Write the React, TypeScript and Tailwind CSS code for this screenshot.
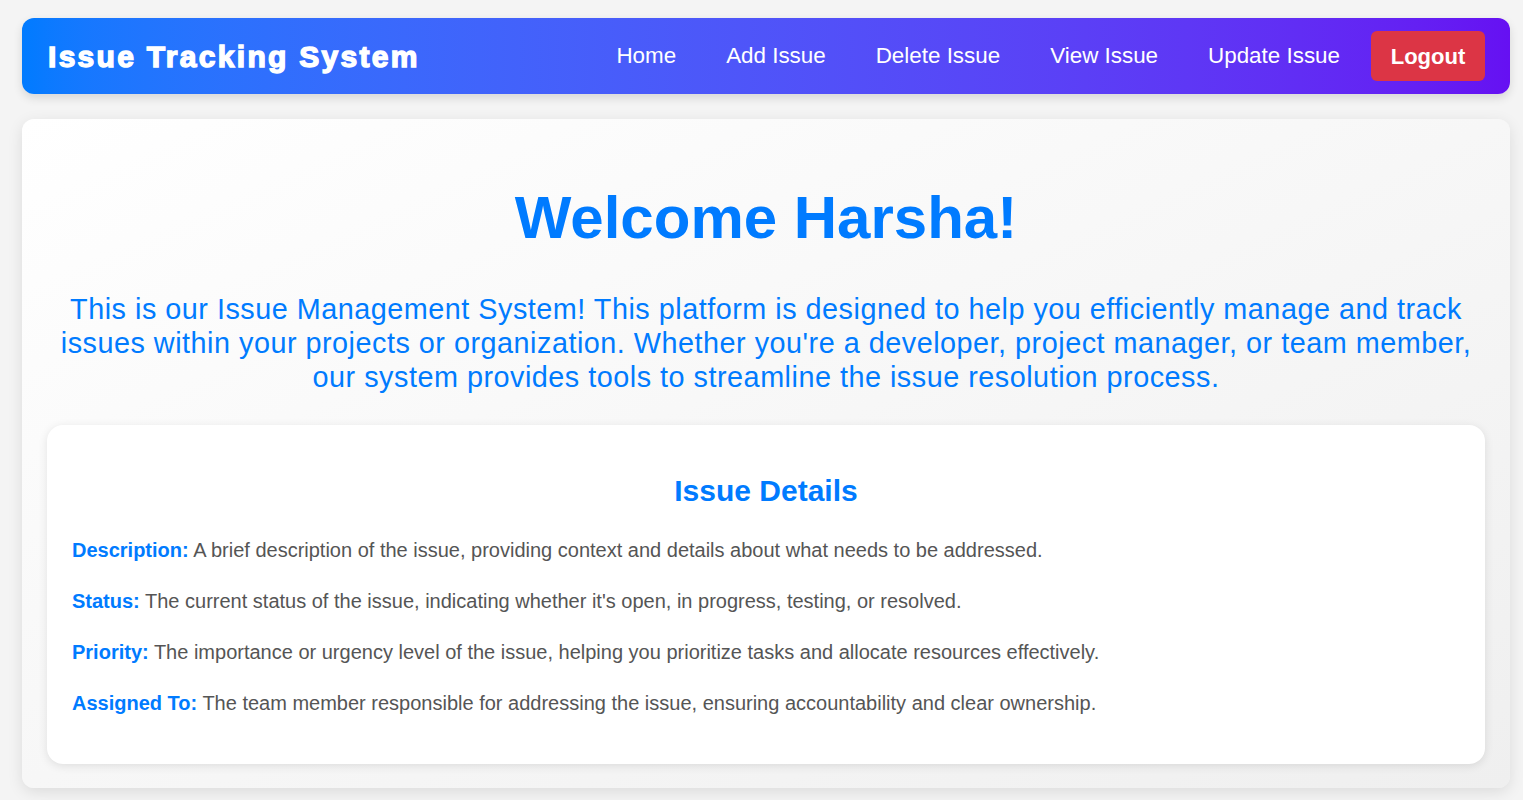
const links = ["Home", "Add Issue", "Delete Issue", "View Issue", "Update Issue"];

const details = [
  {
    label: "Description:",
    text: "A brief description of the issue, providing context and details about what needs to be addressed.",
  },
  {
    label: "Status:",
    text: "The current status of the issue, indicating whether it's open, in progress, testing, or resolved.",
  },
  {
    label: "Priority:",
    text: "The importance or urgency level of the issue, helping you prioritize tasks and allocate resources effectively.",
  },
  {
    label: "Assigned To:",
    text: "The team member responsible for addressing the issue, ensuring accountability and clear ownership.",
  },
];

const App = () => {
  return (
    <div className="min-h-screen bg-[#f4f4f4] pt-[18px] pl-[22px] pr-[13px] pb-3 font-['Liberation_Sans',Arial,sans-serif]">
      <nav className="flex h-[76px] items-center justify-between rounded-xl bg-linear-to-r from-[#007bff] to-[#6610f2] pl-[26px] pr-[25px] shadow-[0_4px_10px_rgba(0,0,0,0.12)]">
        <h1 className="text-[30px] font-bold tracking-[2.3px] text-white [-webkit-text-stroke:1.4px_white]">
          Issue Tracking System
        </h1>
        <div className="flex items-center">
          <div className="flex items-center gap-[50px]">
            {links.map((link) => (
              <button key={link} className="text-[22.4px] text-white">
                {link}
              </button>
            ))}
          </div>
          <button className="ml-[31px] flex h-[50px] w-[114px] items-center justify-center rounded-md bg-[#dc3545] text-[22px] font-bold text-white">
            Logout
          </button>
        </div>
      </nav>

      <main className="mt-[25px] rounded-xl bg-linear-to-br from-white to-[#efefef] px-[25px] pt-[63px] pb-[24px] shadow-[0_4px_15px_rgba(0,0,0,0.1)]">
        <h2 className="text-center text-[60px] leading-[72px] font-bold text-[#007bff]">
          Welcome Harsha!
        </h2>
        <p className="mt-[38px] text-center text-[28.8px] leading-[34px] tracking-[0.5px] text-[#007bff]">
          This is our Issue Management System! This platform is designed to help you efficiently manage and track
          issues within your projects or organization. Whether you're a developer, project manager, or team member,
          our system provides tools to streamline the issue resolution process.
        </p>

        <section className="mt-[31px] rounded-2xl bg-white px-[25px] pt-[48px] pb-[49px] shadow-[0_2px_10px_rgba(0,0,0,0.1)]">
          <h3 className="text-center text-[30px] leading-[36px] font-bold text-[#007bff]">Issue Details</h3>
          <div className="mt-[29px] flex flex-col gap-[27px]">
            {details.map((d) => (
              <p key={d.label} className="text-[20px] leading-[24px] text-[#555]">
                <span className="font-bold text-[#007bff]">{d.label}</span> {d.text}
              </p>
            ))}
          </div>
        </section>
      </main>
    </div>
  );
};

export default App;
